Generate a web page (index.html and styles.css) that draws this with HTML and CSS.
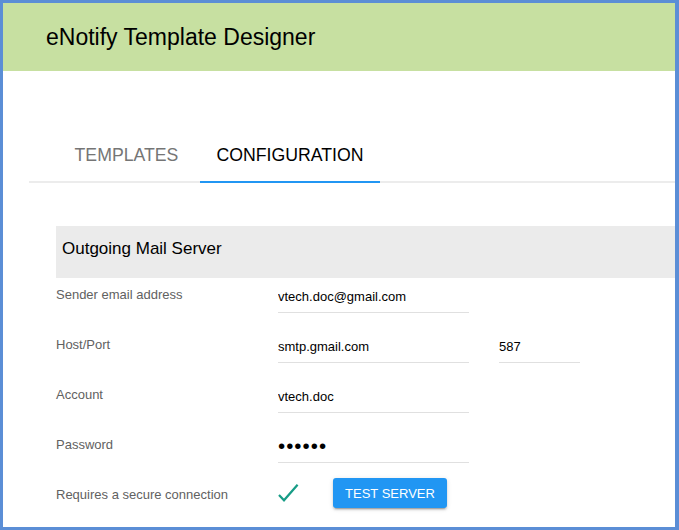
FILE: index.html
```html
<!DOCTYPE html>
<html lang="en">
<head>
<meta charset="utf-8">
<title>eNotify Template Designer</title>
<link rel="stylesheet" href="styles.css">
</head>
<body>
<div class="frame">
  <header class="app-header">
    <h1 class="app-title">eNotify Template Designer</h1>
  </header>

  <nav class="tabs">
    <div class="tab tab-templates">TEMPLATES</div>
    <div class="tab tab-config active">CONFIGURATION</div>
  </nav>

  <section class="panel">
    <h2 class="panel-title">Outgoing Mail Server</h2>
    <div class="form">
      <div class="row">
        <label class="label">Sender email address</label>
        <input class="field field-main" type="text" value="vtech.doc@gmail.com">
      </div>
      <div class="row">
        <label class="label">Host/Port</label>
        <input class="field field-main" type="text" value="smtp.gmail.com">
        <input class="field field-port" type="text" value="587">
      </div>
      <div class="row">
        <label class="label">Account</label>
        <input class="field field-main" type="text" value="vtech.doc">
      </div>
      <div class="row">
        <label class="label">Password</label>
        <input class="field field-main field-password" type="password" value="secret">
      </div>
      <div class="row">
        <label class="label">Requires a secure connection</label>
        <div class="check-cell">
          <svg class="check" width="21" height="18" viewBox="0 0 21 18">
            <path d="M1 11 L6 16.3 L19.6 0.7" fill="none" stroke="#179c86" stroke-width="2.2"/>
          </svg>
        </div>
        <button class="btn" type="button">TEST SERVER</button>
      </div>
    </div>
  </section>
</div>
</body>
</html>
```

FILE: styles.css
```css
html, body {
  margin: 0;
  padding: 0;
  background: #ffffff;
}

.frame {
  box-sizing: border-box;
  width: 679px;
  height: 530px;
  border: 3px solid #5b8ed6;
  border-right-width: 4px;
  overflow: hidden;
  font-family: "Liberation Sans", Arial, sans-serif;
  background: #ffffff;
}

.app-header {
  height: 68px;
  background: #c7e0a1;
  display: flex;
  align-items: center;
  padding-left: 43px;
}

.app-title {
  margin: 0;
  font-size: 23px;
  font-weight: normal;
  color: #000000;
}

.tabs {
  display: flex;
  margin: 62px 0 0 26px;
  padding-left: 24px;
  border-bottom: 2px solid #ececec;
}

.tab {
  box-sizing: border-box;
  text-align: center;
  font-size: 17.7px;
  line-height: 20px;
  padding: 12px 0 16px;
  color: #757575;
}

.tab-templates {
  width: 147px;
}

.tab-config {
  width: 180px;
}

.tab.active {
  color: #000000;
  border-bottom: 2px solid #2196f3;
  margin-bottom: -2px;
}

.panel {
  margin: 43px 0 0 53px;
}

.panel-title {
  margin: 0;
  background: #ebebeb;
  font-size: 17px;
  font-weight: normal;
  line-height: 20px;
  padding: 13px 0 19px 6px;
  color: #000000;
}

.row {
  display: flex;
  align-items: flex-start;
  height: 50px;
}

.label {
  width: 222px;
  flex: none;
  font-size: 13px;
  line-height: 16px;
  padding-top: 9px;
  color: #616161;
}

.field {
  box-sizing: border-box;
  margin: 2px 0 0 0;
  height: 33px;
  padding: 0;
  border: none;
  border-bottom: 1px solid #e0e0e0;
  background: transparent;
  font-family: "Liberation Sans", Arial, sans-serif;
  font-size: 13px;
  color: #000000;
  outline: none;
}

.field-main {
  width: 191px;
}

.field-port {
  width: 81px;
  margin-left: 30px;
}

.field-password {
  font-size: 20.5px;
  letter-spacing: 1px;
}

.check-cell {
  width: 55px;
  flex: none;
}

.check {
  display: block;
  margin-top: 6px;
}

.btn {
  height: 30px;
  width: 114px;
  padding: 0;
  border: none;
  border-radius: 3px;
  background: #2196f3;
  color: #ffffff;
  font-family: "Liberation Sans", Arial, sans-serif;
  font-size: 13px;
  box-shadow: 0 3px 1px -2px rgba(0,0,0,0.2), 0 2px 2px 0 rgba(0,0,0,0.14), 0 1px 5px 0 rgba(0,0,0,0.12);
}
```
